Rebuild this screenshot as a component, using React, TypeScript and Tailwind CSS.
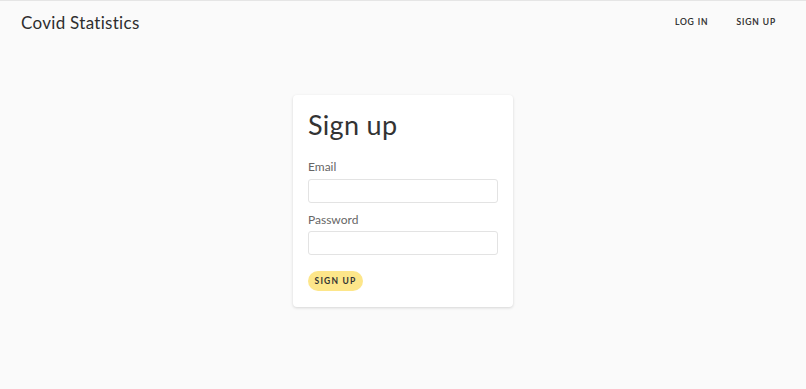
export default function App() {
  const font = { fontFamily: 'Lato, "Noto Sans", sans-serif' };
  return (
    <div className="min-h-[389px] bg-[#fafafa] border-t border-[#e5e5e5] text-[#333]" style={font}>
      <header className="flex items-center justify-between h-[43px] pl-[21px] pr-[30px]">
        <div className="text-[17px] font-normal tracking-[0.3px] text-[#2e2e2e]">Covid Statistics</div>
        <nav className="flex items-center gap-[28px] text-[8.5px] font-normal tracking-[0.9px] text-[#222]">
          <span className="[-webkit-text-stroke:0.2px_#222]">LOG IN</span>
          <span className="[-webkit-text-stroke:0.2px_#222]">SIGN UP</span>
        </nav>
      </header>
      <div className="flex justify-center pt-[51px]">
        <div className="w-[220px] bg-white rounded-[4px] shadow-[0_1px_3px_rgba(0,0,0,0.15)] px-[15px] pt-[12px] pb-[16px]">
          <h1 className="text-[27px] font-normal leading-[36px] text-[#333] tracking-[0.3px]">Sign up</h1>
          <div className="mt-[16px] text-[12px] text-[#666] leading-[16px]">Email</div>
          <div className="mt-[4px] h-[24px] border border-[#e3e3e3] rounded-[3px] bg-white" />
          <div className="mt-[9px] text-[12px] text-[#666] leading-[16px]">Password</div>
          <div className="mt-[3px] h-[24px] border border-[#e3e3e3] rounded-[3px] bg-white" />
          <button className="block mt-[16px] h-[20px] w-[55px] rounded-full bg-[#fde68a] text-[8.5px] font-bold tracking-[1.2px] text-[#333]">
            SIGN UP
          </button>
        </div>
      </div>
    </div>
  );
}
